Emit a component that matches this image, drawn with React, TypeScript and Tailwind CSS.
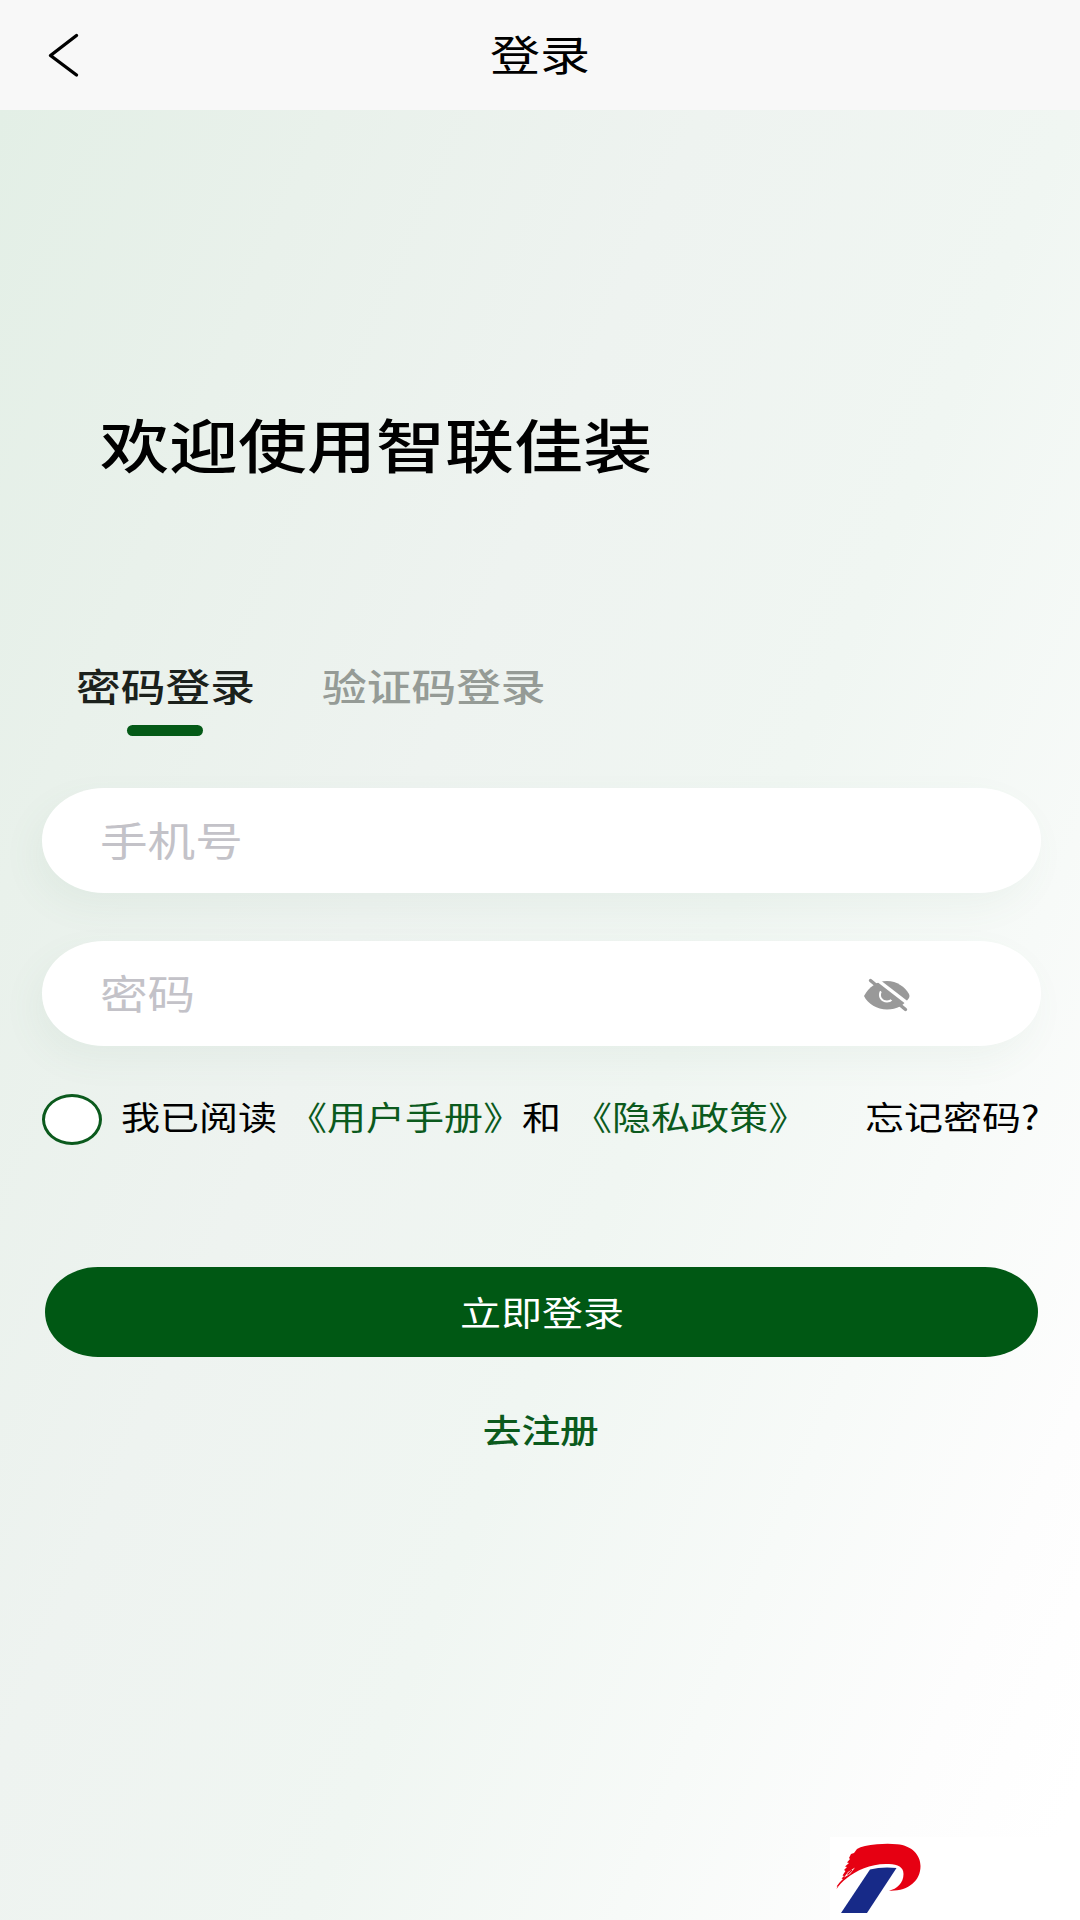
import type { ReactNode } from 'react';

const kaiFont = "font-['Kaiti_SC','KaiTi','STKaiti','Noto_Sans_CJK_SC',sans-serif]";

// Texto levemente alargado na horizontal
function Wide({ children, className = '' }: { children: ReactNode; className?: string }) {
  return (
    <span className={`block whitespace-nowrap scale-x-[1.19] ${className}`}>{children}</span>
  );
}

function BackIcon() {
  return (
    <svg className="w-[32px] h-[46px]" viewBox="0 0 32 46" fill="none">
      <path
        d="M29.500 3.500 3.500 23.500 29.500 43"
        stroke="#000"
        strokeWidth="3.4"
        strokeLinecap="round"
        strokeLinejoin="round"
      />
    </svg>
  );
}

function EyeOffIcon() {
  return (
    <svg className="mt-[2px] w-[48px] h-[34px]" viewBox="0 0 48 34">
      <path
        d="M1 18C6 9 14 3 24 3s18 6 22 13q1 2 0 4C41 27 34 31.500 24 31.500S5 26 1 18Z"
        fill="#999"
      />
      <path d="M18 13c-3 6 1 10.500 6 10.500q3 0 5-2" stroke="#fff" strokeWidth="2" fill="none" />
      <path d="M10.500-1 48 28" stroke="#fff" strokeWidth="3.400" />
      <path d="M7.500 2.500 42.500 31.500" stroke="#999" strokeWidth="3.400" strokeLinecap="round" />
    </svg>
  );
}

function BrandLogo() {
  return (
    <svg className="w-[90px] h-[76px]" viewBox="0 0 90 76">
      <path
        d="M1.500 49 2.500 46 1.500 46.500 5 42 8 39 6.500 38.500 9 36 7.500 35.500 10.500 31 9 30 12 27 10 26.500 14 23 12 22.500 15 19 14 18 16 14 19 13 22 9Q28 5.500 42 4.300 52 3.500 62 4.200C77 5.500 85.500 15 85.500 26 85.500 41 73 51.500 54 50.700 62 49 68.500 43 68.500 34 68.500 27 63 24.500 54 24 37 23 22 30 12 38 7 42 4 45 1.500 49Z"
        fill="#e60012"
      />
      <path d="M9 37.500 13 32 20 27.500 15 34Z" fill="#fff" />
      <path d="M12.500 34.500 17 30" stroke="#e60012" strokeWidth="1.200" />
      <path d="M35 29.500Q47 26.500 61.500 28L32 73H6Z" fill="#172a88" />
    </svg>
  );
}

export default function LoginPage() {
  return (
    <div className="w-[1080px] h-[1920px] overflow-hidden flex flex-col bg-white text-black leading-none font-['Noto_Sans_CJK_SC',sans-serif]">
      <header className="h-[110px] shrink-0 bg-[#f8f8f8] grid grid-cols-[1fr_auto_1fr] items-center px-[47px]">
        <BackIcon />
        <h1 className={`pb-[5px] text-[42px] ${kaiFont}`}>
          <Wide>登录</Wide>
        </h1>
      </header>

      <main className="flex-1 flex flex-col bg-[linear-gradient(113deg,#e3efe6_0%,#e9f1eb_18%,#eef3f0_38%,#f0f6f2_58%,#f7faf8_75%,#fdfdfd_88%,#ffffff_97%)]">
        <h2 className="mt-[304px] ml-[100px] text-[58px] font-medium">
          <Wide className="origin-left">欢迎使用智联佳装</Wide>
        </h2>

        <div className="mt-[194px] ml-[76px] flex text-[37.6px] leading-[38px] font-medium">
          <div className="w-[246px] text-[#1b211c]">
            <Wide className="origin-left">密码登录</Wide>
            <div className="mt-[21px] ml-[51px] w-[76px] h-[11px] rounded-full bg-[#045a17]" />
          </div>
          <div className="text-[#959b96]">
            <Wide className="origin-left">验证码登录</Wide>
          </div>
        </div>

        <div className="mt-[52px] ml-[42px] w-[999px] flex flex-col gap-[48px] text-[40px] text-[#c3c2c8]">
          <div className="h-[105px] flex items-center bg-white pl-[58px] pb-[3px] rounded-[62px/52px] shadow-[-8px_14px_36px_rgba(90,140,105,0.06)]">
            <Wide className="origin-left">手机号</Wide>
          </div>
          <div className="h-[105px] flex items-center justify-between bg-white pl-[58px] pr-[130px] rounded-[62px/52px] shadow-[-8px_14px_36px_rgba(90,140,105,0.06)]">
            <Wide className="origin-left -mt-[3px]">密码</Wide>
            <EyeOffIcon />
          </div>
        </div>

        <div className="mt-[48px] ml-[42px] h-[51px] flex items-center text-[32.8px]">
          <span className="w-[60px] h-[51px] rounded-[50%] border-[3px] border-[#0b5a1d] bg-white" />
          <div className="ml-[19px] pb-[6px] flex">
            <span className="w-[167px]">
              <Wide className="origin-left">我已阅读</Wide>
            </span>
            <span className="w-[234px] text-[#0b5a1d]">
              <Wide className="origin-left">《用户手册》</Wide>
            </span>
            <span className="w-[51px]">
              <Wide className="origin-left">和</Wide>
            </span>
            <span className="w-[292px] text-[#0b5a1d]">
              <Wide className="origin-left">《隐私政策》</Wide>
            </span>
            <span>
              <Wide className="origin-left">忘记密码?</Wide>
            </span>
          </div>
        </div>

        <button
          className={`mt-[122px] ml-[45px] w-[993px] h-[90px] pb-[2px] shrink-0 flex items-center justify-center bg-[#005814] text-white text-[34.500px] rounded-[53px/45px] ${kaiFont}`}
        >
          <Wide>立即登录</Wide>
        </button>

        <div className="mt-[56px] pl-[2px] flex justify-center text-[32.500px] font-medium text-[#0b5a1d]">
          <Wide>去注册</Wide>
        </div>

        <div className="mt-auto ml-[830px] h-[83px] shrink-0 bg-white flex items-start pt-[3px] pl-[5px]">
          <BrandLogo />
        </div>
      </main>
    </div>
  );
}
